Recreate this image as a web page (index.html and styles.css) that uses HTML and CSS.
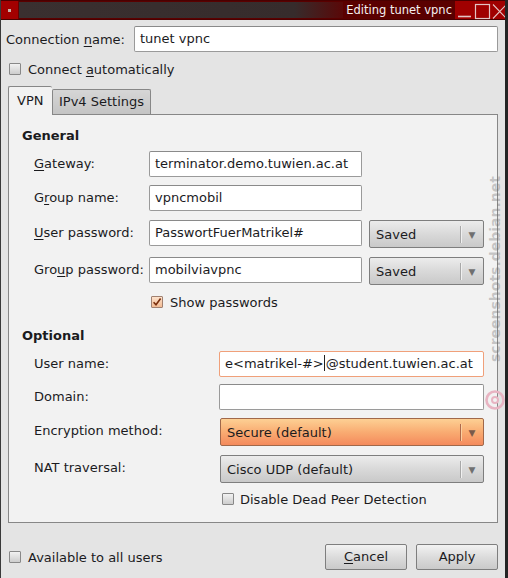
FILE: index.html
```html
<!DOCTYPE html>
<html>
<head>
<meta charset="utf-8">
<title>Editing tunet vpnc</title>
<link rel="stylesheet" href="styles.css">
</head>
<body>
<div class="window">
  <div class="titlebar">
    <div class="tb-icon"><span class="tb-dot"></span></div>
    <div class="tb-mid"></div>
    <div class="tb-title">Editing tunet vpnc</div>
    <div class="tb-buttons">
      <svg class="tb-btn" width="17" height="20" viewBox="0 0 17 20"><path d="M2 15.5H15" stroke="#e2c4c4" stroke-width="1.6" fill="none"/></svg>
      <svg class="tb-btn" width="18" height="20" viewBox="0 0 18 20"><rect x="2.5" y="3.5" width="14" height="14" stroke="#e2c4c4" stroke-width="1.2" fill="none"/></svg>
      <svg class="tb-btn" width="17" height="20" viewBox="0 0 17 20"><path d="M2 3.5L15.5 17.5M15.5 3.5L2 17.5" stroke="#e2c4c4" stroke-width="1.1" fill="none"/></svg>
    </div>
  </div>

  <div class="content">
    <div class="conn-row">
      <span class="conn-label">Connection <u>n</u>ame:</span>
      <div class="entry conn-entry">tunet vpnc</div>
    </div>

    <div class="check-row auto-row">
      <span class="cb"></span>
      <span>Connect <u>a</u>utomatically</span>
    </div>

    <div class="notebook">
      <div class="tabs">
        <div class="tab active">VPN</div>
        <div class="tab">IPv4 Settings</div>
      </div>
      <div class="panel">
        <div class="heading">General</div>
        <div class="grid general">
          <span class="lbl"><u>G</u>ateway:</span>
          <div class="entry e-gen">terminator.demo.tuwien.ac.at</div>
          <span></span>

          <span class="lbl">G<u>r</u>oup name:</span>
          <div class="entry e-gen">vpncmobil</div>
          <span></span>

          <span class="lbl"><u>U</u>ser password:</span>
          <div class="entry e-gen">PasswortFuerMatrikel#</div>
          <div class="combo c-small"><span class="combo-text">Saved</span><span class="sep"></span><span class="arrow">&#9660;</span></div>

          <span class="lbl">Gro<u>u</u>p password:</span>
          <div class="entry e-gen">mobilviavpnc</div>
          <div class="combo c-small"><span class="combo-text">Saved</span><span class="sep"></span><span class="arrow">&#9660;</span></div>

          <span></span>
          <div class="check-row show-row">
            <span class="cb checked"><svg width="10" height="10" viewBox="0 0 10 10"><path d="M1.6 5.2L4 7.8L8.6 1.6" stroke="#7a2e0c" stroke-width="1.6" fill="none"/></svg></span>
            <span>Show passwords</span>
          </div>
          <span></span>
        </div>

        <div class="heading optional-h">Optional</div>
        <div class="grid optional">
          <span class="lbl">User name:</span>
          <div class="entry e-opt focus">e&lt;matrikel-#&gt;<span class="caret"></span>@student.tuwien.ac.at</div>

          <span class="lbl">Domain:</span>
          <div class="entry e-opt"></div>

          <span class="lbl">Encryption method:</span>
          <div class="combo c-wide orange"><span class="combo-text">Secure (default)</span><span class="sep"></span><span class="arrow">&#9660;</span></div>

          <span class="lbl">NAT traversal:</span>
          <div class="combo c-wide"><span class="combo-text">Cisco UDP (default)</span><span class="sep"></span><span class="arrow">&#9660;</span></div>

          <span></span>
          <div class="check-row dpd-row">
            <span class="cb"></span>
            <span>Disable Dead Peer Detection</span>
          </div>
        </div>
      </div>
    </div>

    <div class="footer">
      <div class="check-row all-row">
        <span class="cb"></span>
        <span>Available to all users</span>
      </div>
      <div class="buttons">
        <div class="button"><u>C</u>ancel</div>
        <div class="button">Apply</div>
      </div>
    </div>
  </div>

  <div class="watermark">screenshots.debian.net</div>
  <svg class="wm-logo" width="22" height="22" viewBox="0 0 22 22">
    <circle cx="11" cy="11" r="8.5" stroke="#e8b4c2" stroke-width="2.6" fill="none"/>
    <circle cx="11" cy="11" r="3" stroke="#e8b4c2" stroke-width="2" fill="none"/>
  </svg>
</div>
</body>
</html>
```

FILE: styles.css
```css
html, body {
  margin: 0;
  padding: 0;
}

body {
  font-family: "DejaVu Sans", "Noto Sans", sans-serif;
  font-size: 13px;
  color: #1b1b1e;
}

u {
  text-decoration: underline;
  text-underline-offset: 2px;
  text-decoration-thickness: 1px;
}

.window {
  position: relative;
  width: 508px;
  height: 578px;
  box-sizing: border-box;
  background: #e4e4e4;
  border-left: 1px solid #3a3a3a;
  border-right: 3px solid #242424;
  overflow: hidden;
}

/* ---------- title bar ---------- */
.titlebar {
  display: flex;
  height: 20px;
  margin-left: -1px;
  margin-right: -3px;
  background: #5a0000;
  box-sizing: border-box;
  border-top: 1px solid #4a0000;
  border-bottom: 1px solid #4a0000;
}

.tb-icon {
  width: 19px;
  background: #a30000;
  display: flex;
  align-items: center;
  justify-content: center;
  box-sizing: border-box;
  border-right: 1px solid #6a0000;
}

.tb-dot {
  width: 3px;
  height: 3px;
  background: #c8b0a8;
}

.tb-mid {
  flex: 1;
  margin: 1px 0;
  background: linear-gradient(to right, #3a3030 0%, #362c2c 85%, #5a0808 100%);
}

.tb-title {
  color: #f4f0f0;
  font-size: 11.5px;
  line-height: 18px;
  padding: 0 3px 0 3px;
  background: #5a0000;
}

.tb-buttons {
  display: flex;
  background: #a00000;
  padding-left: 1px;
}

.tb-btn {
  display: block;
}

/* ---------- content ---------- */
.content {
  padding: 0 7px 0 7px;
}

.conn-row {
  display: flex;
  align-items: center;
  margin-top: 6px;
  height: 26px;
}

.conn-label {
  width: 128px;
  margin-left: -2px;
  flex: none;
}

.entry {
  box-sizing: border-box;
  height: 26px;
  line-height: 24px;
  padding: 0 5px;
  background: #ffffff;
  border: 1px solid #9a9a9a;
  border-top-color: #8a8a8a;
  border-radius: 2px;
  white-space: nowrap;
  overflow: hidden;
}

.conn-entry {
  flex: 1;
  margin-right: 0;
}

.check-row {
  display: flex;
  align-items: center;
  gap: 7px;
}

.cb {
  width: 12px;
  height: 12px;
  box-sizing: border-box;
  border: 1px solid #888888;
  border-radius: 1px;
  background: linear-gradient(#f2f2f2, #cdcdcd);
  flex: none;
  display: flex;
  align-items: center;
  justify-content: center;
}

.cb.checked {
  border-color: #a08070;
  background: linear-gradient(#fde2cc, #f2bb94);
}

.auto-row {
  height: 18px;
  margin-top: 8px;
  margin-left: 1px;
}

/* ---------- notebook ---------- */
.notebook {
  margin-top: 8px;
}

.tabs {
  display: flex;
  align-items: flex-end;
  height: 28px;
  position: relative;
  z-index: 1;
}

.tab {
  box-sizing: border-box;
  height: 25px;
  line-height: 23px;
  padding: 0 6px;
  border: 1px solid #878787;
  border-bottom: none;
  border-radius: 2px 2px 0 0;
  background: linear-gradient(#d6d6d6, #c4c4c4);
}

.tab.active {
  height: 29px;
  margin-bottom: -1px;
  line-height: 27px;
  padding: 0 8px 0 8px;
  width: 44px;
  background: #f2f2f2;
  border-right: none;
}

.panel {
  box-sizing: border-box;
  height: 409px;
  background: #f2f2f2;
  border: 1px solid #878787;
  padding: 13px 0 0 13px;
}

.heading {
  font-weight: bold;
  line-height: 16px;
  height: 16px;
  margin-bottom: 7px;
}

.optional-h {
  margin-top: 18px;
}

.grid {
  display: grid;
  margin-left: 12px;
  align-items: start;
}

.general {
  grid-template-columns: 108px 213px 115px;
  grid-template-rows: 34px 35px 37px 37px 16px;
  column-gap: 7px;
}

.optional {
  grid-template-columns: 185px 265px;
  grid-template-rows: 33px 34px 37px 37px 16px;
}

.lbl {
  line-height: 26px;
  white-space: nowrap;
}

.combo {
  box-sizing: border-box;
  height: 28px;
  display: flex;
  align-items: center;
  padding-left: 6px;
  border: 1px solid #7e7e7e;
  border-radius: 2px;
  background: linear-gradient(#ececec, #d9d9d9 50%, #c9c9c9);
}

.combo-text {
  flex: 1;
  white-space: nowrap;
}

.sep {
  width: 1px;
  height: 17px;
  background: #a8a8a8;
  box-shadow: 1px 0 0 #f0f0f0;
}

.arrow {
  width: 22px;
  text-align: center;
  font-size: 9px;
  color: #707070;
  padding-top: 1px;
}

.c-wide {
  margin-left: 1px;
  width: 264px;
}

.orange {
  border-color: #a0684a;
  background: linear-gradient(#fdd094, #f9ac72 50%, #f48a5c);
}

.orange .sep {
  background: #b06a4a;
  box-shadow: 1px 0 0 #fbcfa0;
}

.orange .arrow {
  color: #7a5a4a;
}

.show-row {
  margin-left: 2px;
  height: 12px;
  margin-top: 2px;
}

.dpd-row {
  margin-left: 3px;
  height: 12px;
  margin-top: 1px;
  gap: 6px;
}

.focus {
  border-color: #f0a07a;
}

.caret {
  display: inline-block;
  width: 1px;
  height: 16px;
  background: #222;
  vertical-align: -3px;
  margin: 0 0.5px;
}

/* ---------- footer ---------- */
.footer {
  display: flex;
  justify-content: space-between;
  align-items: center;
  margin-top: 21px;
  height: 26px;
}

.all-row {
  margin-left: 1px;
}

.buttons {
  display: flex;
  gap: 9px;
  margin-right: 0;
}

.button {
  box-sizing: border-box;
  width: 82px;
  height: 26px;
  line-height: 24px;
  text-align: center;
  border: 1px solid #7e7e7e;
  border-radius: 2px;
  background: linear-gradient(#f2f2f2, #dcdcdc 50%, #cacaca);
}

/* ---------- watermark overlay ---------- */
.watermark {
  position: absolute;
  left: 485px;
  top: 176px;
  writing-mode: vertical-rl;
  transform: rotate(180deg);
  font-weight: bold;
  font-size: 14px;
  line-height: 18px;
  color: rgba(110, 110, 110, 0.36);
  white-space: nowrap;
}

.wm-logo {
  position: absolute;
  left: 483px;
  top: 389px;
}
```
